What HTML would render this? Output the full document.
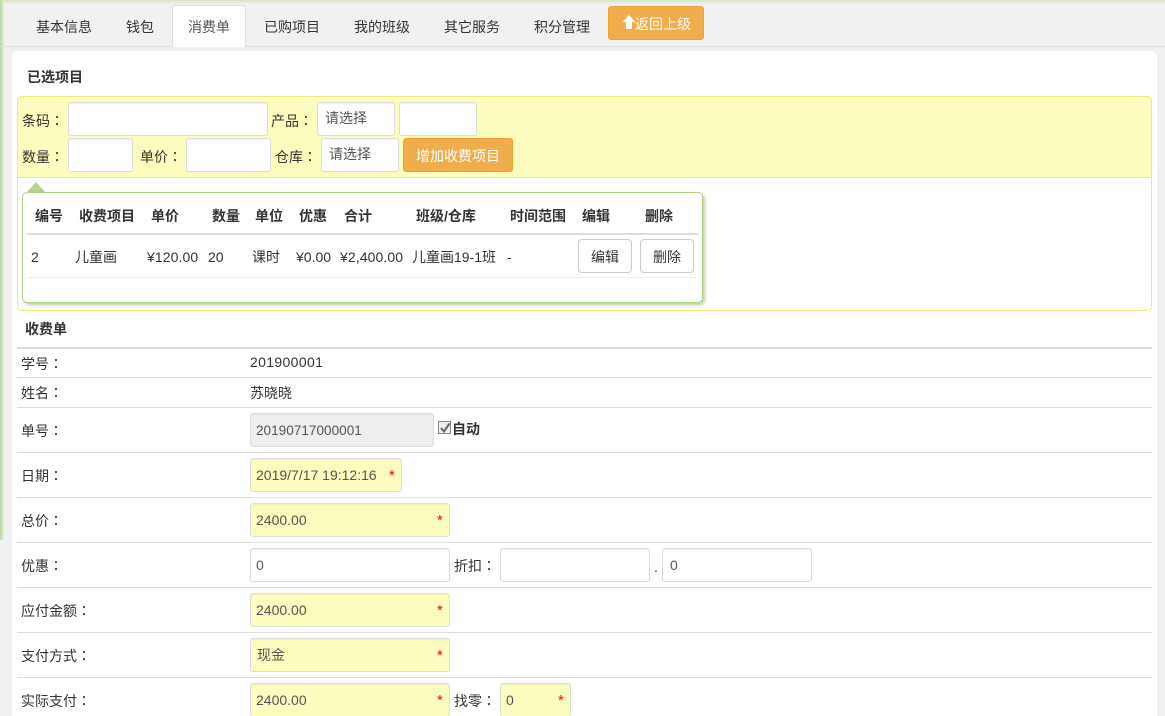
<!DOCTYPE html>
<html><head><meta charset="utf-8">
<style>
html,body{margin:0;padding:0;width:1165px;height:716px;overflow:hidden;background:#f1f1f1;}
body{position:relative;font-family:"Liberation Sans","Noto Sans CJK SC",sans-serif;font-size:14px;color:#333;}
div,span.t{position:absolute;box-sizing:border-box;}
.t{white-space:nowrap;line-height:18px;height:18px;}
.b{font-weight:bold;}
.c{font-family:"Noto Sans CJK TC",sans-serif;}
.inp{background:#fff;border:1px solid #dcdcdc;border-radius:3px;height:34px;color:#555;line-height:32px;padding-left:5px;box-shadow:inset 0 1px 1px rgba(0,0,0,.05);}
.sel{line-height:31px;padding-left:7px;}
.y{background:#fdfcbf;}
.star{color:#f00;font-size:15px;line-height:16px;height:16px;}
.ln{left:17px;width:1135px;height:1px;background:#ddd;}
.btn{background:#f0ad4e;border:1px solid #eea236;border-radius:3px;color:#fff;text-align:center;}
.wb{background:#fff;border:1px solid #ccc;border-radius:4px;height:34px;line-height:35px;text-align:center;color:#333;}
</style></head><body>
<div style="left:0;top:0;width:1165px;height:4px;background:linear-gradient(#d5e5c4,#f1f1f1)"></div>
<div style="left:0;top:0;width:4px;height:540px;border-radius:0 0 3px 0;background:linear-gradient(90deg,#b8d6a0,#e6efdc)"></div>
<div style="left:0;top:46px;width:1165px;height:1px;background:#ddd"></div>

<div style="left:172px;top:5px;width:74px;height:42px;background:#fff;border:1px solid #ddd;border-bottom:0;border-radius:4px 4px 0 0"></div>
<span class="t" style="left:36px;top:18px">基本信息</span>
<span class="t" style="left:126px;top:18px">钱包</span>
<span class="t" style="left:188px;top:18px;color:#555">消费单</span>
<span class="t" style="left:264px;top:18px">已购项目</span>
<span class="t" style="left:354px;top:18px">我的班级</span>
<span class="t" style="left:444px;top:18px">其它服务</span>
<span class="t" style="left:534px;top:18px">积分管理</span>
<div class="btn" style="left:608px;top:6px;width:96px;height:34px"></div>
<svg style="position:absolute;left:622px;top:15px" width="14" height="15" viewBox="0 0 14 15"><path d="M7 0L13.5 7H10V14H4V7H.5Z" fill="#fff"/></svg>
<span class="t" style="left:635px;top:15px;color:#fff;font-size:14px">返回上级</span>

<div style="left:12px;top:51px;width:1145px;height:680px;background:#fff;border-radius:6px"></div>
<span class="t b" style="left:27px;top:68px">已选项目</span>

<div style="left:17px;top:96px;width:1135px;height:215px;border:1px solid #ede882;border-radius:5px;background:#fff"></div>
<div style="left:17px;top:96px;width:1135px;height:82px;border:1px solid #ede882;border-radius:5px 5px 0 0;background:#fdfcbf"></div>

<span class="t" style="left:22px;top:112px">条码<span class="c">：</span></span>
<div class="inp" style="left:68px;top:102px;width:200px"></div>
<span class="t" style="left:271px;top:112px">产品<span class="c">：</span></span>
<div class="inp sel" style="left:317px;top:102px;width:78px">请选择</div>
<div class="inp" style="left:399px;top:102px;width:78px"></div>

<span class="t" style="left:22px;top:148px">数量<span class="c">：</span></span>
<div class="inp" style="left:68px;top:138px;width:65px"></div>
<span class="t" style="left:140px;top:148px">单价<span class="c">：</span></span>
<div class="inp" style="left:186px;top:138px;width:85px"></div>
<span class="t" style="left:275px;top:148px">仓库<span class="c">：</span></span>
<div class="inp sel" style="left:321px;top:138px;width:78px">请选择</div>
<div class="btn" style="left:403px;top:138px;width:110px;height:34px;line-height:34px">增加收费项目</div>

<svg style="position:absolute;left:25px;top:182px" width="22" height="11"><path d="M11 0L21 11H1Z" fill="#b9d293"/></svg>
<div style="left:22px;top:192px;width:681px;height:111px;background:#fff;border:1px solid #b0d083;border-radius:5px;box-shadow:2px 2px 3px rgba(130,165,90,.55)"></div>
<span class="t b" style="left:35px;top:207px">编号</span>
<span class="t b" style="left:79px;top:207px">收费项目</span>
<span class="t b" style="left:151px;top:207px">单价</span>
<span class="t b" style="left:212px;top:207px">数量</span>
<span class="t b" style="left:255px;top:207px">单位</span>
<span class="t b" style="left:299px;top:207px">优惠</span>
<span class="t b" style="left:344px;top:207px">合计</span>
<span class="t b" style="left:416px;top:207px">班级/仓库</span>
<span class="t b" style="left:510px;top:207px">时间范围</span>
<span class="t b" style="left:582px;top:207px">编辑</span>
<span class="t b" style="left:645px;top:207px">删除</span>
<div style="left:27px;top:233px;width:671px;height:2px;background:#ddd"></div>
<span class="t" style="left:31px;top:248px">2</span>
<span class="t" style="left:75px;top:248px">儿童画</span>
<span class="t" style="left:147px;top:248px;letter-spacing:.1px">¥120.00</span>
<span class="t" style="left:208px;top:248px">20</span>
<span class="t" style="left:252px;top:248px">课时</span>
<span class="t" style="left:296px;top:248px">¥0.00</span>
<span class="t" style="left:340px;top:248px;letter-spacing:.1px">¥2,400.00</span>
<span class="t" style="left:412px;top:248px">儿童画19-1班</span>
<span class="t" style="left:507px;top:248px">-</span>
<div class="wb" style="left:578px;top:239px;width:54px">编辑</div>
<div class="wb" style="left:640px;top:239px;width:54px">删除</div>
<div style="left:27px;top:277px;width:671px;height:0;border-top:1px dotted #ddd"></div>

<span class="t b" style="left:25px;top:320px">收费单</span>
<div class="ln" style="top:347px;height:2px"></div>
<span class="t" style="left:21px;top:355px">学号<span class="c">：</span></span>
<span class="t" style="left:250px;top:353px;letter-spacing:.35px">201900001</span>
<div class="ln" style="top:377px"></div>
<span class="t" style="left:21px;top:384px">姓名<span class="c">：</span></span>
<span class="t" style="left:250px;top:384px">苏晓晓</span>
<div class="ln" style="top:407px"></div>
<span class="t" style="left:21px;top:422px">单号<span class="c">：</span></span>
<div class="inp" style="left:250px;top:413px;width:184px;background:#eee;font-size:13.6px;line-height:34px">20190717000001</div>
<div style="left:438px;top:421px;width:13px;height:13px;border:1px solid #888;background:#eee"></div>
<svg style="position:absolute;left:439px;top:422px" width="12" height="12"><path d="M2 6L5 9.5L10.5 1.5" fill="none" stroke="#666" stroke-width="2"/></svg>
<span class="t b" style="left:452px;top:420px">自动</span>
<div class="ln" style="top:452px"></div>
<span class="t" style="left:21px;top:467px">日期<span class="c">：</span></span>
<div class="inp y" style="left:250px;top:458px;width:152px">2019/7/17 19:12:16</div>
<span class="t star" style="left:389px;top:468px">*</span>
<div class="ln" style="top:497px"></div>
<span class="t" style="left:21px;top:512px">总价<span class="c">：</span></span>
<div class="inp y" style="left:250px;top:503px;width:200px">2400.00</div>
<span class="t star" style="left:437px;top:513px">*</span>
<div class="ln" style="top:542px"></div>
<span class="t" style="left:21px;top:557px">优惠<span class="c">：</span></span>
<div class="inp" style="left:250px;top:548px;width:200px">0</div>
<span class="t" style="left:454px;top:557px">折扣<span class="c">：</span></span>
<div class="inp" style="left:500px;top:548px;width:150px"></div>
<span class="t" style="left:654px;top:558px">.</span>
<div class="inp" style="left:662px;top:548px;width:150px;padding-left:7px">0</div>
<div class="ln" style="top:587px"></div>
<span class="t" style="left:21px;top:602px">应付金额<span class="c">：</span></span>
<div class="inp y" style="left:250px;top:593px;width:200px">2400.00</div>
<span class="t star" style="left:437px;top:603px">*</span>
<div class="ln" style="top:632px"></div>
<span class="t" style="left:21px;top:647px">支付方式<span class="c">：</span></span>
<div class="inp y" style="left:250px;top:638px;width:200px;padding-left:6px">现金</div>
<span class="t star" style="left:437px;top:648px">*</span>
<div class="ln" style="top:677px"></div>
<span class="t" style="left:21px;top:692px">实际支付<span class="c">：</span></span>
<div class="inp y" style="left:250px;top:683px;width:200px">2400.00</div>
<span class="t star" style="left:437px;top:693px">*</span>
<span class="t" style="left:454px;top:692px">找零<span class="c">：</span></span>
<div class="inp y" style="left:500px;top:683px;width:71px">0</div>
<span class="t star" style="left:558px;top:693px">*</span>
</body></html>
